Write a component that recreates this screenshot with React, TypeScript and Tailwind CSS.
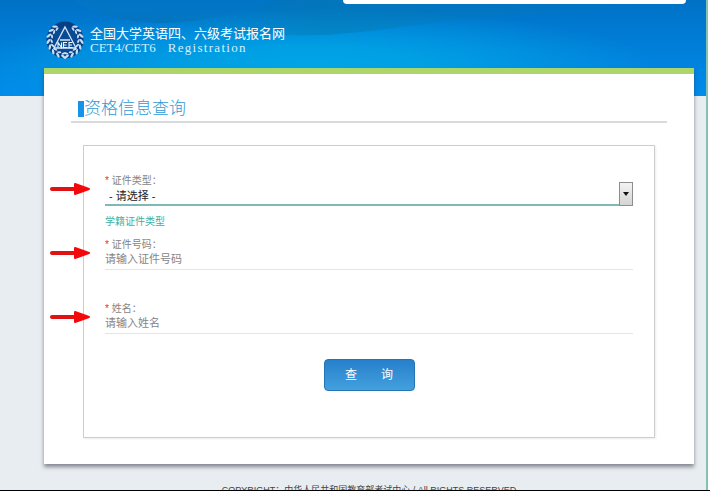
import React from "react";

function Emblem() {
  const leaves = [12, 32, 52, 72, 92, 112, 132, 150];
  return (
    <svg className="h-[38px] w-[38px] shrink-0" viewBox="0 0 38 38" aria-label="NEEA" role="img">
      <circle cx="19" cy="19" r="18.500" fill="#073f86" />
      <g fill="#c6def3">
        {leaves.map((a) => (
          <g key={a}>
            <g transform={`rotate(${180 + a} 19 19)`}>
              <ellipse cx="17" cy="2.4" rx="2.8" ry="1.2" transform="rotate(28 17 2.4)" />
              <ellipse cx="17.5" cy="5.6" rx="2.2" ry="1" transform="rotate(-28 17.5 5.6)" />
            </g>
            <g transform={`rotate(${180 - a} 19 19)`}>
              <ellipse cx="21" cy="2.4" rx="2.8" ry="1.2" transform="rotate(-28 21 2.4)" />
              <ellipse cx="20.5" cy="5.6" rx="2.2" ry="1" transform="rotate(28 20.5 5.6)" />
            </g>
          </g>
        ))}
      </g>
      <circle cx="19" cy="18.500" r="12" fill="#0a4a94" />
      <path d="M19 6 L30 27 H8 Z M14 19 H24" fill="none" stroke="#d8eaf8" strokeWidth="1.3" />
      <path d="M12 26.500v-5l3.500 5v-5M21 21.500h-3.500v5h3.500M17.500 24h3M26.500 21.500h-3.500v5h3.500M23 24h3" fill="none" stroke="#eef7ff" strokeWidth="1.1" />
    </svg>
  );
}

function Waves() {
  return (
    <svg className="absolute inset-0 h-full w-full" viewBox="0 0 706 96" preserveAspectRatio="none" aria-hidden="true">
      <defs>
        <linearGradient id="band" x1="0" x2="1" y1="0" y2="0">
          <stop offset="0" stopColor="#0579b0" stopOpacity="0.05" />
          <stop offset="0.3" stopColor="#0579b0" stopOpacity="0.5" />
          <stop offset="1" stopColor="#0579b0" stopOpacity="0" />
        </linearGradient>
        <linearGradient id="swell" x1="0" x2="0" y1="0" y2="1">
          <stop offset="0" stopColor="#0a86c4" stopOpacity="0.1" />
          <stop offset="1" stopColor="#0668a8" stopOpacity="0.5" />
        </linearGradient>
      </defs>
      <path d="M72 0 C95 14 125 23 165 23 C205 22 245 12 275 0 Z" fill="url(#swell)" />
      <path d="M165 23 C205 22 245 12 275 0 L700 0 L700 5 C560 10 470 18 400 27 C360 33 320 37 285 35 C240 34 200 28 165 23 Z" fill="url(#band)" />
    </svg>
  );
}

function Arrow() {
  return (
    <svg className="absolute -left-14 top-[9px] h-4 w-[42px]" viewBox="0 0 42 16" aria-hidden="true">
      <path d="M3 8H30" stroke="#e01214" strokeWidth="4" strokeLinecap="round" />
      <path d="M26 3L40 8L26 13Z" fill="#f5080b" stroke="#f5080b" strokeWidth="2" strokeLinejoin="round" />
    </svg>
  );
}

function FieldLabel({ id, text }: { id: string; text: string }) {
  return (
    <label htmlFor={id} className="block h-4 text-[10px] leading-[18px] text-[#858585]">
      <span className="text-[#e0303a]">*</span> {text}：
    </label>
  );
}

function TextField({ id, label, hint }: { id: string; label: string; hint: string }) {
  return (
    <div className="relative">
      <Arrow />
      <FieldLabel id={id} text={label} />
      <input
        id={id}
        type="text"
        placeholder={hint}
        className="block h-[18px] w-full border-b border-[#e4e4e4] bg-transparent pb-1 text-[11px] leading-3 outline-none placeholder:text-[#858585]"
      />
    </div>
  );
}

export default function App() {
  return (
    <div className="h-screen border-b border-black bg-white pr-[2px] font-['Liberation_Sans','Noto_Sans_CJK_SC',sans-serif]">
      <div className="h-full overflow-hidden border-r-2 border-[#85c0b0] bg-[#e8edf1]">
        <header className="relative h-24 bg-linear-to-b from-[#0072c6] to-[#008cec]">
          <div className="absolute inset-0 bg-[radial-gradient(ellipse_at_44%_70%,#00a6e6_0%,#00a0e4_20%,transparent_62%)]" />
          <Waves />
          <div className="relative ml-[343px] mr-5 h-1 rounded-b-lg bg-white" />
          <div className="relative ml-[46px] mt-[17px] flex items-center gap-[6px] text-white">
            <Emblem />
            <div>
              <h1 className="text-[13px] leading-4">全国大学英语四、六级考试报名网</h1>
              <p className="flex gap-3 font-['Liberation_Serif',serif] text-[13px] leading-3 text-[#d5effc]">
                <span>CET4/CET6</span>
                <span className="tracking-widest">Registration</span>
              </p>
            </div>
          </div>
        </header>

        <main className="relative -mt-7 ml-11 mr-3 border-t-[6px] border-[#acd66b] bg-white px-[27px] pb-[26px] pt-[25px] shadow-[0_3px_4px_0_rgba(50,50,65,0.55)]">
          <div className="flex h-6 items-start border-b-2 border-[#d9dadb] pl-[7px]">
            <div className="mt-[2px] h-4 w-[6px] bg-[#1593ea]" />
            <h2 className="text-[17px] font-light leading-5 text-[#2f9ad6]">资格信息查询</h2>
          </div>

          <form
            onSubmit={(e) => e.preventDefault()}
            className="mx-3 mt-[22px] border border-[#cdcdcd] px-[21px] pb-[46px] pt-[26px] shadow-[1px_1px_2px_rgba(0,0,0,0.08)]"
          >
            <div className="relative">
              <Arrow />
              <FieldLabel id="idType" text="证件类型" />
              <select
                id="idType"
                className="block h-[18px] w-full appearance-none border-b-2 border-[#7fb9b7] bg-transparent pl-1 text-[11px] leading-4 text-[#222] outline-none"
              >
                <option>- 请选择 -</option>
              </select>
              <div className="pointer-events-none absolute bottom-0 right-0 flex h-6 w-[14px] items-center justify-center border border-[#8d8d8d] bg-linear-to-b from-[#f3f3f3] to-[#d4d4d4]">
                <svg className="h-1 w-[6px]" viewBox="0 0 6 4" aria-hidden="true">
                  <path d="M0 0H6L3 4Z" fill="#111" />
                </svg>
              </div>
            </div>
            <p className="mb-1.5 mt-2 text-[10px] leading-4 text-[#3fb0a5]">学籍证件类型</p>
            <TextField id="idNumber" label="证件号码" hint="请输入证件号码" />
            <div className="mt-[30px]">
              <TextField id="fullName" label="姓名" hint="请输入姓名" />
            </div>
            <button
              type="submit"
              className="mx-auto mt-[25px] block h-8 w-[91px] rounded border border-[#2574b4] bg-linear-to-b from-[#2680cb] to-[#43a0de] text-[12px] leading-4 text-white"
            >
              查　　询
            </button>
          </form>
        </main>

        <footer className="ml-11 mr-3 mt-5 whitespace-nowrap text-center text-[9px] leading-3 text-[#444]">
          COPYRIGHT：中华人民共和国教育部考试中心 / All RIGHTS RESERVED
        </footer>
      </div>
    </div>
  );
}
